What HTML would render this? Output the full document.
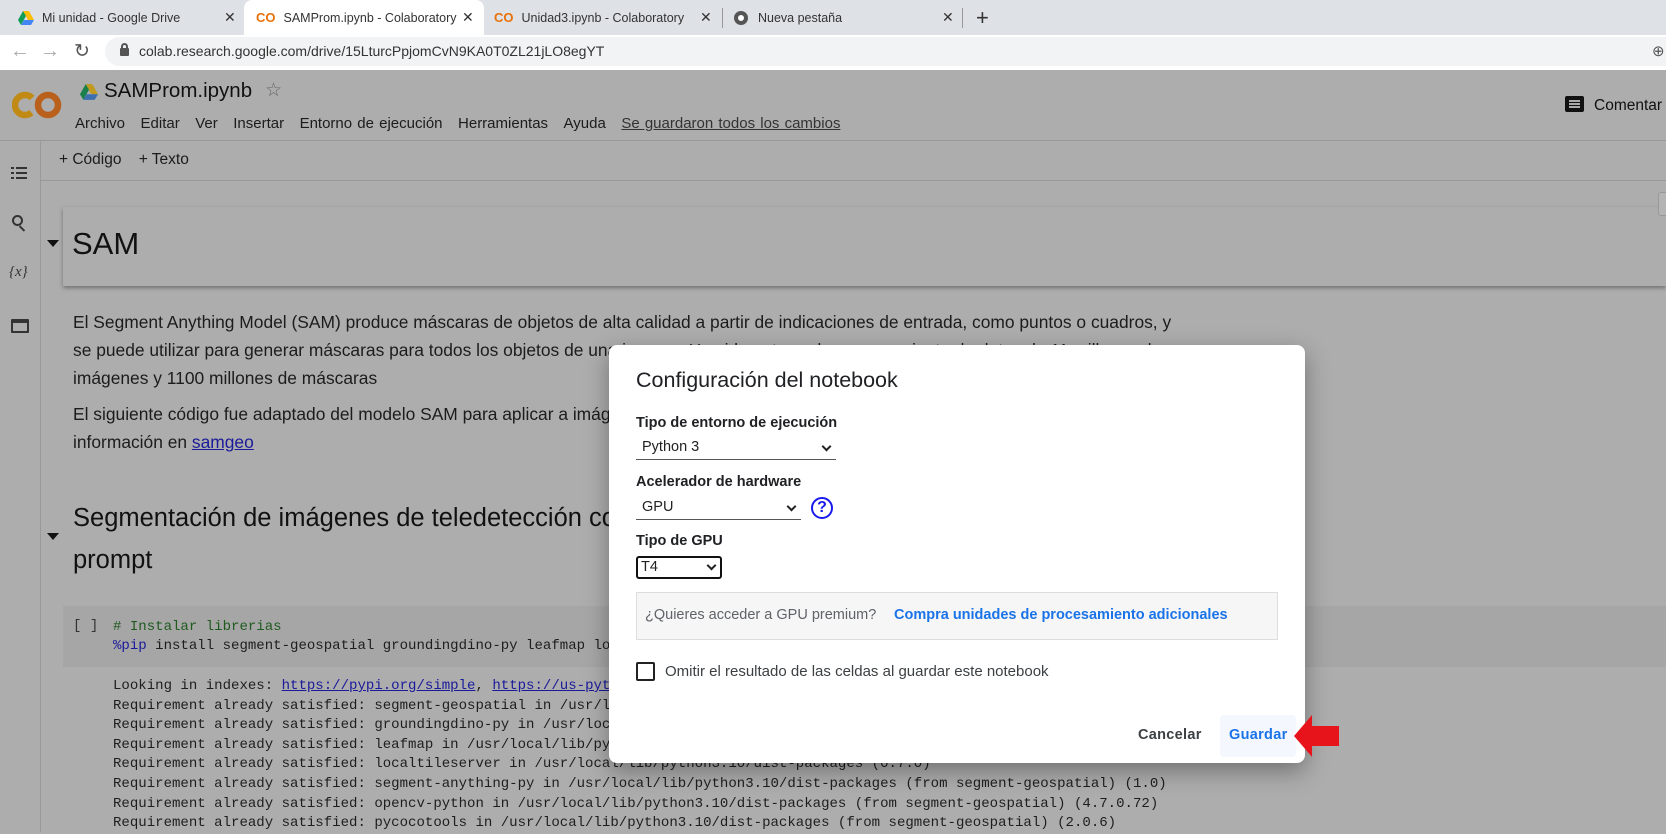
<!DOCTYPE html>
<html><head><meta charset="utf-8"><style>
*{margin:0;padding:0;box-sizing:border-box}
body{width:1666px;height:832px;overflow:hidden;position:relative;background:#adadad;font-family:"Liberation Sans",Arial,sans-serif;color:#1c1c1c}
.a{position:absolute;white-space:nowrap}
.mono{font-family:"Liberation Mono",monospace;font-size:14.05px;color:#1e1e1e}
.tab{position:absolute;top:0;height:35px;font-size:12.5px;color:#333;display:flex;align-items:center}
.sel{position:absolute;border-bottom:1px solid #555;font-size:14.5px;color:#222;padding-left:6px;height:24px;line-height:22px}
.chev{position:absolute;right:6px;top:7px;width:7px;height:7px;border-right:2px solid #222;border-bottom:2px solid #222;transform:rotate(45deg)}
</style></head><body>
<div class="a" style="left:0;top:0;width:1666px;height:35px;background:#dee1e6"></div>
<div class="a" style="left:244px;top:0;width:240px;height:35px;background:#fff;border-radius:8px 8px 0 0"></div>
<div class="tab" style="left:18px"><svg width="16" height="14" viewBox="0 0 16 14"><path d="M5 0h6l5 9h-6z" fill="#fbbc04"/><path d="M5 0L0 9l3 5 5-9z" fill="#0f9d58"/><path d="M3 14h10l3-5H6z" fill="#4285f4"/></svg><span style="margin-left:8px">Mi unidad - Google Drive</span></div>
<div class="tab" style="left:224px;font-size:14px">✕</div>
<div class="tab" style="left:256px"><span style="color:#e8710a;font-weight:bold;font-size:13px">CO</span><span style="margin-left:8px">SAMProm.ipynb - Colaboratory</span></div>
<div class="tab" style="left:462px;font-size:14px">✕</div>
<div class="tab" style="left:494px"><span style="color:#e8710a;font-weight:bold;font-size:13px">CO</span><span style="margin-left:8px">Unidad3.ipynb - Colaboratory</span></div>
<div class="tab" style="left:700px;font-size:14px">✕</div>
<div class="a" style="left:722px;top:8px;width:1px;height:20px;background:#999"></div>
<div class="tab" style="left:734px"><span style="display:inline-block;width:14px;height:14px;border-radius:50%;border:4px solid #555;background:#fff"></span><span style="margin-left:10px">Nueva pestaña</span></div>
<div class="tab" style="left:942px;font-size:14px">✕</div>
<div class="a" style="left:962px;top:8px;width:1px;height:20px;background:#999"></div>
<div class="tab" style="left:976px;font-size:22px;color:#333">+</div>
<div class="a" style="left:0;top:35px;width:1666px;height:35px;background:#fff"></div>
<div class="a" style="left:10px;top:40px;font-size:20px;color:#aaa">←</div>
<div class="a" style="left:40px;top:40px;font-size:20px;color:#aaa">→</div>
<div class="a" style="left:74px;top:40px;font-size:19px;color:#555">↻</div>
<div class="a" style="left:105px;top:37px;width:1561px;height:29px;background:#f1f3f4;border-radius:15px 0 0 15px"></div>
<div class="a" style="left:120px;top:48px;width:9px;height:8px;background:#555;border-radius:1px"></div>
<div class="a" style="left:121px;top:43px;width:7px;height:7px;border:2px solid #555;border-bottom:none;border-radius:4px 4px 0 0"></div>
<div class="a" style="left:139px;top:43px;font-size:14px;color:#333">colab.research.google.com/drive/15LturcPpjomCvN9KA0T0ZL21jLO8egYT</div>
<div class="a" style="left:1652px;top:42px;font-size:15px;color:#555">⊕</div>
<div class="a" style="left:12px;top:88px;width:50px;height:34px">
<svg width="50" height="34" viewBox="0 0 50 34"><circle cx="13" cy="17" r="10" fill="none" stroke="#c08a14" stroke-width="6.5" stroke-dasharray="46 17" transform="rotate(50 13 17)"/><circle cx="36" cy="17" r="10" fill="none" stroke="#b9601c" stroke-width="6.5"/></svg></div>
<div class="a" style="left:80px;top:84px"><svg width="18" height="16" viewBox="0 0 16 14"><path d="M5 0h6l5 9h-6z" fill="#c19a20"/><path d="M5 0L0 9l3 5 5-9z" fill="#1a7f4b"/><path d="M3 14h10l3-5H6z" fill="#3c6fb0"/></svg></div>
<div class="a" style="left:104px;top:79px;font-size:20.5px;color:#111">SAMProm.ipynb</div>
<div class="a" style="left:265px;top:79px;font-size:19px;color:#666">☆</div>
<div class="a" style="left:75px;top:115px;font-size:15px;color:#1c1c1c;word-spacing:1px">Archivo&nbsp;&nbsp;&nbsp;Editar&nbsp;&nbsp;&nbsp;Ver&nbsp;&nbsp;&nbsp;Insertar&nbsp;&nbsp;&nbsp;Entorno de ejecución&nbsp;&nbsp;&nbsp;Herramientas&nbsp;&nbsp;&nbsp;Ayuda&nbsp;&nbsp;&nbsp;<span style="text-decoration:underline;color:#333">Se guardaron todos los cambios</span></div>
<div class="a" style="left:1565px;top:96px;width:19px;height:16px;background:#111;border-radius:2px"></div>
<div class="a" style="left:1569px;top:100px;width:11px;height:2px;background:#aaa;box-shadow:0 3px 0 #aaa,0 6px 0 #aaa"></div>
<div class="a" style="left:1594px;top:97px;font-size:15.5px;color:#111">Comentar</div>
<div class="a" style="left:0;top:140px;width:1666px;height:1px;background:#999"></div>
<div class="a" style="left:40px;top:141px;width:1px;height:691px;background:#999"></div>
<div class="a" style="left:40px;top:180px;width:1626px;height:1px;background:#999"></div>
<div class="a" style="left:59px;top:151px;font-size:15.5px;color:#1c1c1c">+ Código&nbsp;&nbsp;&nbsp;&nbsp;+ Texto</div>
<div class="a" style="left:11px;top:167px;width:3px;height:2px;background:#333;box-shadow:0 5px 0 #333,0 10px 0 #333"></div>
<div class="a" style="left:16px;top:167px;width:11px;height:2px;background:#333;box-shadow:0 5px 0 #333,0 10px 0 #333"></div>
<div class="a" style="left:12px;top:215px;width:11px;height:11px;border:2px solid #333;border-radius:50%"></div>
<div class="a" style="left:21px;top:225px;width:2px;height:7px;background:#333;transform:rotate(-45deg)"></div>
<div class="a" style="left:9px;top:264px;font-size:15px;color:#333;font-style:italic;font-family:'Liberation Serif',serif">{x}</div>
<div class="a" style="left:11px;top:319px;width:18px;height:14px;border:2px solid #333;border-top-width:4px;border-radius:1px"></div>
<div class="a" style="left:63px;top:207px;width:1603px;height:79px;background:#adadad;box-shadow:0 2px 4px rgba(0,0,0,.35)"></div>
<div class="a" style="left:47px;top:240px;width:0;height:0;border-left:6px solid transparent;border-right:6px solid transparent;border-top:7px solid #111"></div>
<div class="a" style="left:72px;top:226px;font-size:31px;color:#111">SAM</div>
<div class="a" style="left:1658px;top:192px;width:10px;height:24px;background:#b4b4b4;border:1px solid #999;border-radius:3px"></div>
<div class="a" style="left:73px;top:308px;font-size:17.4px;line-height:28px;color:#1c1c1c">El Segment Anything Model (SAM) produce máscaras de objetos de alta calidad a partir de indicaciones de entrada, como puntos o cuadros, y<br>se puede utilizar para generar máscaras para todos los objetos de una imagen. Ha sido entrenado en un conjunto de datos de 11 millones de<br>imágenes y 1100 millones de máscaras</div>
<div class="a" style="left:73px;top:400px;font-size:17.4px;line-height:28px;color:#1c1c1c">El siguiente código fue adaptado del modelo SAM para aplicar a imágenes de teledetección con indicaciones de texto. Puedes encontrar más<br>información en <span style="color:#1a1a9a;text-decoration:underline">samgeo</span></div>
<div class="a" style="left:73px;top:497px;font-size:25.5px;line-height:42px;color:#111">Segmentación de imágenes de teledetección con indicaciones de texto mediante Segment Anything Model y<br>prompt</div>
<div class="a" style="left:47px;top:533px;width:0;height:0;border-left:6px solid transparent;border-right:6px solid transparent;border-top:7px solid #111"></div>
<div class="a" style="left:63px;top:606px;width:1603px;height:61px;background:#a6a6a6"></div>
<div class="a mono" style="left:73px;top:618px;color:#333">[ ]</div>
<div class="a mono" style="left:113px;top:618px;line-height:19px"><span style="color:#1f5a1f"># Instalar librerias</span><br><span style="color:#1a1a9a">%pip</span> install segment-geospatial groundingdino-py leafmap localtileserver</div>
<div class="a mono" style="left:113px;top:677px;line-height:19.6px">Looking in indexes: <span style="color:#1a1a9a;text-decoration:underline">https://pypi.org/simple</span>, <span style="color:#1a1a9a;text-decoration:underline">https://us-python.pkg.dev/colab-wheels/public/simple/</span><br>Requirement already satisfied: segment-geospatial in /usr/local/lib/python3.10/dist-packages (0.8.0)<br>Requirement already satisfied: groundingdino-py in /usr/local/lib/python3.10/dist-packages (0.1.0)<br>Requirement already satisfied: leafmap in /usr/local/lib/python3.10/dist-packages (0.21.0)<br>Requirement already satisfied: localtileserver in /usr/local/lib/python3.10/dist-packages (0.7.0)<br>Requirement already satisfied: segment-anything-py in /usr/local/lib/python3.10/dist-packages (from segment-geospatial) (1.0)<br>Requirement already satisfied: opencv-python in /usr/local/lib/python3.10/dist-packages (from segment-geospatial) (4.7.0.72)<br>Requirement already satisfied: pycocotools in /usr/local/lib/python3.10/dist-packages (from segment-geospatial) (2.0.6)</div>
<div class="a" style="left:609px;top:345px;width:696px;height:418px;background:#fff;border-radius:8px;box-shadow:0 8px 24px rgba(0,0,0,.35)"></div>
<div class="a" style="left:636px;top:368px;font-size:21.5px;color:#202124">Configuración del notebook</div>
<div class="a" style="left:636px;top:415px;font-size:14.5px;font-weight:bold;color:#202124">Tipo de entorno de ejecución</div>
<div class="sel" style="left:636px;top:436px;width:200px">Python 3<span class="chev"></span></div>
<div class="a" style="left:636px;top:474px;font-size:14.5px;font-weight:bold;color:#202124">Acelerador de hardware</div>
<div class="sel" style="left:636px;top:496px;width:165px">GPU<span class="chev"></span></div>
<div class="a" style="left:811px;top:497px;width:22px;height:22px;border:2px solid #1a1aee;border-radius:50%;color:#1a1aee;font-size:16px;font-weight:bold;text-align:center;line-height:18px">?</div>
<div class="a" style="left:636px;top:533px;font-size:14.5px;font-weight:bold;color:#202124">Tipo de GPU</div>
<div class="sel" style="left:636px;top:556px;width:86px;height:23px;border:2px solid #111;border-radius:3px;padding-left:3px;line-height:19px">T4<span class="chev" style="top:4px;right:5px"></span></div>
<div class="a" style="left:636px;top:592px;width:642px;height:48px;background:#f6f6f6;border:1px solid #ddd"></div>
<div class="a" style="left:645px;top:607px;font-size:14.5px;color:#5f6368">¿Quieres acceder a GPU premium?</div>
<div class="a" style="left:894px;top:607px;font-size:14.5px;font-weight:bold;color:#1a73e8">Compra unidades de procesamiento adicionales</div>
<div class="a" style="left:636px;top:662px;width:19px;height:19px;border:2px solid #222;border-radius:2px"></div>
<div class="a" style="left:665px;top:663px;font-size:15px;color:#3c4043">Omitir el resultado de las celdas al guardar este notebook</div>
<div class="a" style="left:1138px;top:727px;font-size:14.5px;font-weight:bold;color:#3c4043;letter-spacing:.3px">Cancelar</div>
<div class="a" style="left:1220px;top:715px;width:76px;height:42px;background:#f4f8fe;border-radius:4px"></div>
<div class="a" style="left:1229px;top:727px;font-size:14.5px;font-weight:bold;color:#1a73e8;letter-spacing:.3px">Guardar</div>
<svg class="a" style="left:1293px;top:713px" width="48" height="46" viewBox="0 0 48 46"><path d="M1 23L19 2V13H46V33H19V44Z" fill="#e8141c"/></svg>
</body></html>
